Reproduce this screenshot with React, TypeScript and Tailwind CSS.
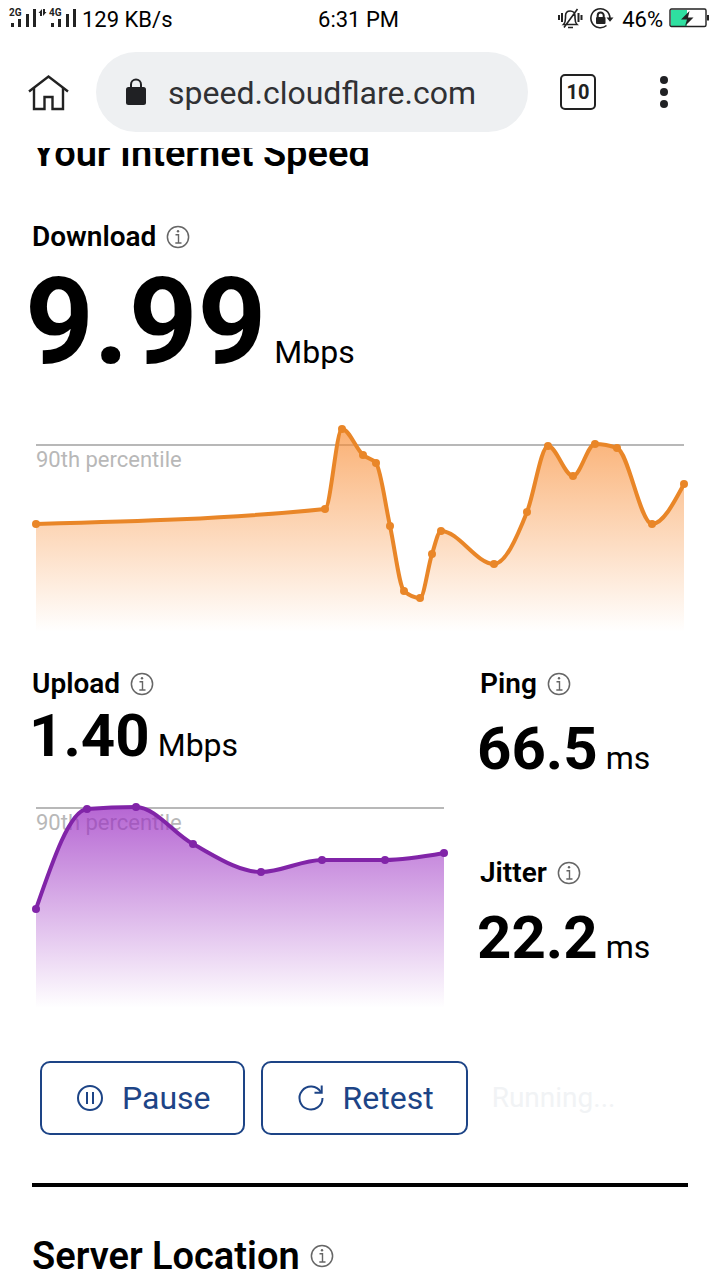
import type { ReactNode } from 'react';

type Point = [number, number];

const DOWNLOAD: Point[] = [
  [4, 104], [293, 89], [310, 9], [331, 35], [344, 43], [358, 106], [372, 171], [388, 178],
  [400, 134], [409, 111], [462, 144], [495, 92], [516, 26], [541, 56], [563, 24], [585, 28],
  [620, 104], [652, 64],
];

const UPLOAD: Point[] = [
  [4, 109], [55, 9], [104, 7], [161, 44], [229, 72], [290, 60], [353, 60], [412, 53],
];

// Monotone cubic through the samples, so the curve never overshoots a point.
function monotonePath(pts: Point[]) {
  const n = pts.length;
  const h: number[] = [];
  const s: number[] = [];
  for (let i = 0; i < n - 1; i++) {
    h.push(pts[i + 1][0] - pts[i][0]);
    s.push((pts[i + 1][1] - pts[i][1]) / h[i]);
  }
  const m: number[] = new Array(n).fill(0);
  for (let i = 1; i < n - 1; i++) {
    const p = (s[i - 1] * h[i] + s[i] * h[i - 1]) / (h[i - 1] + h[i]);
    m[i] =
      (Math.sign(s[i - 1]) + Math.sign(s[i])) *
      Math.min(Math.abs(s[i - 1]), Math.abs(s[i]), 0.5 * Math.abs(p));
  }
  m[0] = (3 * s[0] - m[1]) / 2;
  m[n - 1] = (3 * s[n - 2] - m[n - 2]) / 2;

  let d = `M${pts[0][0]},${pts[0][1]}`;
  for (let i = 0; i < n - 1; i++) {
    const [x0, y0] = pts[i];
    const [x1, y1] = pts[i + 1];
    const dx = h[i] / 3;
    d += `C${x0 + dx},${y0 + dx * m[i]} ${x1 - dx},${y1 - dx * m[i + 1]} ${x1},${y1}`;
  }
  return d;
}

interface ChartProps {
  id: string;
  label: string;
  points: Point[];
  width: number;
  height: number;
  percentileY: number;
  stroke: string;
  fill: string;
  topOpacity: number;
}

function Chart({ id, label, points, width, height, percentileY, stroke, fill, topOpacity }: ChartProps) {
  const line = monotonePath(points);
  const right = width - 4;
  return (
    <svg viewBox={`0 0 ${width} ${height}`} className="block w-full" role="img" aria-label={label}>
      <defs>
        <linearGradient id={id} gradientUnits="userSpaceOnUse" x1="0" y1="8" x2="0" y2={height}>
          <stop offset="0" stopColor={fill} stopOpacity={topOpacity} />
          <stop offset="1" stopColor={fill} stopOpacity="0" />
        </linearGradient>
      </defs>
      <line x1="4" x2={right} y1={percentileY} y2={percentileY} stroke="#b8b8b8" strokeWidth="2" />
      <text x="4" y={percentileY + 22} className="fill-[#b8b8b8] text-[22px]">
        90th percentile
      </text>
      <path d={`${line}V${height}H4Z`} fill={`url(#${id})`} />
      <path d={line} fill="none" stroke={stroke} strokeWidth="4" strokeLinejoin="round" />
      {points.map(([x, y]) => (
        <circle key={x} cx={x} cy={y} r="4" fill={stroke} />
      ))}
    </svg>
  );
}

function InfoButton({ label }: { label: string }) {
  return (
    <button type="button" aria-label={label} className="shrink-0 text-[#666]">
      <svg viewBox="0 0 24 24" className="block size-6" fill="none" stroke="currentColor">
        <circle cx="12" cy="12" r="10.600" strokeWidth="1.5" />
        <path d="M9.500 9.800h3V18M9.300 18h6.200" strokeWidth="1.4" />
        <circle cx="12" cy="6.300" r="1.200" fill="currentColor" stroke="none" />
      </svg>
    </button>
  );
}

function Label({ children }: { children: string }) {
  return (
    <div className="flex items-center gap-2.5">
      <h2 className="text-[28px] leading-8 font-semibold">{children}</h2>
      <InfoButton label={`About ${children}`} />
    </div>
  );
}

function Metric({ value, unit }: { value: string; unit: string }) {
  return (
    <p className="-ml-[3px] flex items-baseline gap-2">
      <span className="text-[60px] leading-[60px] font-bold">{value}</span>
      <span className="text-[32px] leading-8">{unit}</span>
    </p>
  );
}

function Signal({ network }: { network: string }) {
  return (
    <svg viewBox="0 0 28 20" className="h-5 w-7" fill="#222">
      <text x="1" y="8" className="text-[10px] font-bold">{network}</text>
      <rect x="3" y="15" width="3" height="4" />
      <rect x="10" y="11" width="3" height="8" />
      <rect x="18" y="6" width="3" height="13" />
      <rect x="25" y="1" width="3" height="18" />
    </svg>
  );
}

function StatusBar() {
  return (
    <div className="grid h-9 grid-cols-[1fr_auto_1fr] items-center pr-[11px] pl-2 text-[22px]">
      <div className="flex items-center">
        <Signal network="2G" />
        <svg viewBox="0 0 12 20" className="h-5 w-3" fill="#222">
          <path d="M4 8V5H2.500L6 1v7zM7 1v7l3.500-4H9V1z" />
        </svg>
        <Signal network="4G" />
        <span className="ml-1.5 pt-0.5">129 KB/s</span>
      </div>
      <span className="pt-0.5">6:31 PM</span>
      <div className="flex items-center justify-end">
        <svg viewBox="0 0 26 22" className="mr-1.5 h-[22px] w-[26px]" fill="none" stroke="#222" strokeWidth="2">
          <path d="M2 8v5M5 6v9M21.500 6v9M24.500 8v5" />
          <path d="M6.500 17.500h13.500C18.500 16 18 14 18 11V9c0-3-2-5-4.800-5S8.500 6 8.500 9v2c0 3-.5 5-2 6.500zM11 20.500h5M20.500 2L7 20.500" strokeWidth="1.600" />
        </svg>
        <svg viewBox="0 0 26 24" className="mr-[7px] h-6 w-[26px]" fill="none" stroke="#222" strokeWidth="1.6">
          <path d="M17.500 19.500A9.500 9.500 0 1 1 20.900 12" />
          <path d="M17.500 11.500h7L21 15.800z" fill="#222" stroke="none" />
          <rect x="7" y="11" width="9.500" height="7" rx="1" fill="#222" stroke="none" />
          <path d="M8.700 11V9.500a3 3 0 0 1 6 0V11" strokeWidth="2" />
        </svg>
        <span className="pt-0.5">46%</span>
        <svg viewBox="0 0 40 20" className="ml-1.5 h-5 w-10">
          <rect x="2" y="2" width="16" height="16" fill="#2fdfa0" />
          <rect x="1" y="1" width="36" height="17.500" rx="1.500" fill="none" stroke="#222" strokeWidth="1.4" />
          <path d="M38 7h2v5.500h-2z" fill="#222" />
          <path d="M20.500 3l-8.500 8.500h6L16 18l8.500-8.500H19z" fill="#222" />
        </svg>
      </div>
    </div>
  );
}

function BrowserBar() {
  return (
    <div className="flex h-28 items-center pr-11 pl-7">
      <button type="button" aria-label="Home">
        <svg viewBox="0 0 42 38" className="h-[38px] w-[42px]" fill="none" stroke="#222" strokeWidth="2.4">
          <path d="M1 18.500L20.500 3.500L40 18.500" />
          <path d="M6 15v21h10.500V24h8v12H35V15" />
        </svg>
      </button>
      <div className="mr-8 ml-[26px] flex h-20 flex-1 items-center rounded-full bg-[#eef0f2] pr-6 pl-[30px]">
        <svg viewBox="0 0 20 28" className="mr-[22px] h-7 w-5 shrink-0" fill="#202124">
          <rect y="9" width="20" height="18" rx="2.500" />
          <path d="M5 9.500V6.500a5 5 0 0 1 10 0V9.500" fill="none" stroke="#202124" strokeWidth="2" />
        </svg>
        <input
          aria-label="Address"
          defaultValue="speed.cloudflare.com"
          className="w-full min-w-0 bg-transparent pt-0.5 text-[32px] leading-10 text-[#303134] outline-none"
        />
      </div>
      <button
        type="button"
        aria-label="10 open tabs"
        className="flex size-9 items-center justify-center rounded-[5px] border-2 border-[#222] text-xl leading-6 font-bold text-[#222]"
      >
        10
      </button>
      <button type="button" aria-label="More options" className="ml-14 flex w-6 justify-center">
        <svg viewBox="0 0 8 34" className="h-[34px] w-2" fill="#202124">
          <circle cx="4" cy="5" r="4" />
          <circle cx="4" cy="17" r="4" />
          <circle cx="4" cy="29" r="4" />
        </svg>
      </button>
    </div>
  );
}

function ActionButton({ icon, children }: { icon: ReactNode; children: string }) {
  return (
    <button
      type="button"
      className="flex h-[74px] items-center gap-[18px] rounded-[10px] border-2 border-[#1d4486] pr-8 pl-[34px] text-[32px] leading-10 text-[#1d4486]"
    >
      {icon}
      {children}
    </button>
  );
}

export default function App() {
  return (
    <div className="bg-white font-[Roboto,sans-serif] text-black">
      <header>
        <StatusBar />
        <BrowserBar />
      </header>

      <main className="overflow-hidden px-8">
        {/* scrolled partly under the browser bar */}
        <h1 className="-mt-[19px] text-[38px] leading-[48px] font-semibold">Your Internet Speed</h1>

        <section className="mt-11">
          <Label>Download</Label>
          <p className="mt-[9px] -ml-[7px] flex items-baseline gap-2">
            <span className="text-[120px] leading-[120px] font-bold">9.99</span>
            <span className="text-[32px] leading-8">Mbps</span>
          </p>
          <div className="mt-[38px]">
            <Chart
              id="download-fill"
              label="Download speed"
              points={DOWNLOAD}
              width={656}
              height={212}
              percentileY={25}
              stroke="#e98628"
              fill="#f88a30"
              topOpacity={0.68}
            />
          </div>
        </section>

        <div className="mt-9 grid grid-cols-[2fr_1fr] gap-8">
          <section>
            <Label>Upload</Label>
            <div className="mt-1.5">
              <Metric value="1.40" unit="Mbps" />
            </div>
            <div className="mt-[34px]">
              <Chart
                id="upload-fill"
                label="Upload speed"
                points={UPLOAD}
                width={416}
                height={208}
                percentileY={8}
                stroke="#8124a8"
                fill="#9a2cc2"
                topOpacity={0.72}
              />
            </div>
          </section>
          <div>
            <section>
              <Label>Ping</Label>
              <div className="mt-[19px]">
                <Metric value="66.5" unit="ms" />
              </div>
            </section>
            <section className="mt-[78px]">
              <Label>Jitter</Label>
              <div className="mt-[19px]">
                <Metric value="22.2" unit="ms" />
              </div>
            </section>
          </div>
        </div>

        <div className="mt-[53px] ml-2 flex items-center gap-4">
          <ActionButton
            icon={
              <svg viewBox="0 0 28 28" className="size-7" fill="none" stroke="currentColor" strokeWidth="2">
                <circle cx="14" cy="14" r="12" />
                <path d="M11 8v12M17 8v12" />
              </svg>
            }
          >
            Pause
          </ActionButton>
          <ActionButton
            icon={
              <svg viewBox="0 0 28 28" className="size-7" fill="none" stroke="currentColor" strokeWidth="2">
                <path d="M25.500 14A11.500 11.500 0 1 1 23.800 8" />
                <path d="M24.700 1.500V8.700H17.500" />
              </svg>
            }
          >
            Retest
          </ActionButton>
          <span className="ml-2 text-[28px] leading-8 text-[#f1f3f5]">Running...</span>
        </div>

        <hr className="mt-12 border-t-4 border-black" />

        <div className="mt-[45px] flex items-center gap-2.5">
          <h2 className="text-[38px] leading-[48px] font-semibold">Server Location</h2>
          <InfoButton label="About Server Location" />
        </div>
      </main>
    </div>
  );
}
